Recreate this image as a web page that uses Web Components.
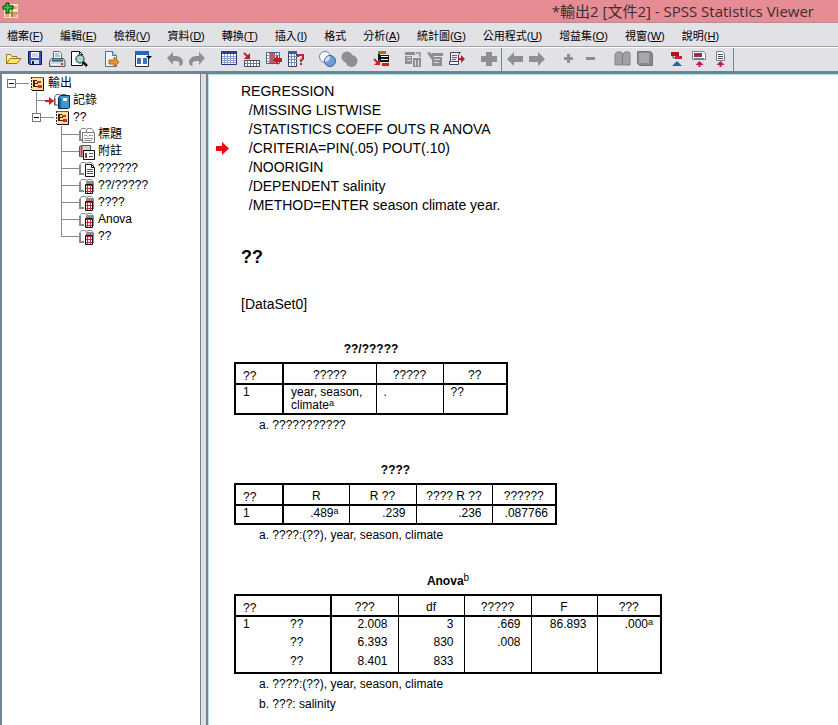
<!DOCTYPE html>
<html lang="zh-Hant">
<head>
<meta charset="utf-8">
<title>*輸出2 [文件2] - SPSS Statistics Viewer</title>
<style>
    body{
        margin:0;
        font-family:"Liberation Sans", "Noto Sans CJK TC", sans-serif;
        font-size:12px;
        color:#000;
    }
</style>
</head>
<body>
<viewer-window>
    <title-bar slot="title">*輸出2 [文件2] - SPSS Statistics Viewer</title-bar>
    <menu-bar slot="menu">
        <menu-entry key="F">檔案</menu-entry>
        <menu-entry key="E">編輯</menu-entry>
        <menu-entry key="V">檢視</menu-entry>
        <menu-entry key="D">資料</menu-entry>
        <menu-entry key="T">轉換</menu-entry>
        <menu-entry key="I">插入</menu-entry>
        <menu-entry>格式</menu-entry>
        <menu-entry key="A">分析</menu-entry>
        <menu-entry key="G">統計圖</menu-entry>
        <menu-entry key="U">公用程式</menu-entry>
        <menu-entry key="O">增益集</menu-entry>
        <menu-entry key="W">視窗</menu-entry>
        <menu-entry key="H">說明</menu-entry>
    </menu-bar>
    <tool-bar slot="tools" groups="open save print preview|export|dialog|undo redo|data case variable variables|select weight|designate|addcase script run|plus"></tool-bar>
    <tool-bar slot="tools" groups="back forward|expand collapse|show hide|heading title text"></tool-bar>

    <tree-item slot="outline" icon="output" label="輸出" open root>
        <tree-item icon="log" label="記錄" current></tree-item>
        <tree-item icon="output" label="??" open last>
            <tree-item icon="title" label="標題"></tree-item>
            <tree-item icon="notes" label="附註"></tree-item>
            <tree-item icon="page" label="??????"></tree-item>
            <tree-item icon="table" label="??/?????"></tree-item>
            <tree-item icon="table" label="????"></tree-item>
            <tree-item icon="table" label="Anova"></tree-item>
            <tree-item icon="table" label="??" last></tree-item>
        </tree-item>
    </tree-item>

    <output-log>REGRESSION
  /MISSING LISTWISE
  /STATISTICS COEFF OUTS R ANOVA
  /CRITERIA=PIN(.05) POUT(.10)
  /NOORIGIN
  /DEPENDENT salinity
  /METHOD=ENTER season climate year.</output-log>
    <output-heading>??</output-heading>
    <output-text>[DataSet0]</output-text>
    <pivot-table name="entered"></pivot-table>
    <pivot-table name="summary"></pivot-table>
    <pivot-table name="anova"></pivot-table>
</viewer-window>

<script>
const GRAY = '#8f8f92';

// toolbar icons, 18 x 18
const toolIcons = {
    open: `<path d="M2.500 13.500V4.500h4l1.500 2h5v2.500" fill="#fff3ae" stroke="#9a7a1c"/><path d="M2.500 13.500l3.500-5h11l-4 5z" fill="#ffe36a" stroke="#9a7a1c"/>`,
    save: `<path d="M2.500 1.500h13v13h-12l-1-1z" fill="#3b52b4" stroke="#10184f"/><path d="M5 2h8v6H5z" fill="#fff"/><path d="M6 4h6M6 6h6" stroke="#8aa"/><path d="M5 10h8v4H5z" fill="#d7dbe6"/><path d="M6 11h2v3H6z" fill="#10184f"/>`,
    print: `<path d="M5.500 9V1.500h6l2 2V9" fill="#fff" stroke="#3a7b84"/><path d="M7 4h4M7 6h5" stroke="#3a9aa8"/><path d="M3.500 8.500h12l1.500 3v5H1.500v-5z" fill="#d6d6d2" stroke="#54585c"/><path d="M4 10.500h11" stroke="#17657c" stroke-width="2"/><path d="M3 14.500h9" stroke="#fff"/><path d="M13 13h2v2h-2z" fill="#d33"/>`,
    preview: `<path d="M1.500 1.500h8l3 3v11h-11z" fill="#fff" stroke="#111"/><path d="M9.500 1.500v3h3" fill="none" stroke="#111"/><circle cx="10" cy="9" r="4" fill="#a9d6da" stroke="#53666b" stroke-width="1.500"/><path d="M13 12l4 4" stroke="#111" stroke-width="2.500"/>`,
    export: `<path d="M3.500 1.500h7l4 4v11h-11z" fill="#eef5fb" stroke="#42798c"/><path d="M10.500 1.500v4h4" fill="#b9d8e6" stroke="#42798c"/><path d="M7 10h5V7l5 5-5 5v-3H7z" fill="#f3922b" stroke="#b9640f"/>`,
    dialog: `<path d="M1.500 1.500h13v15h-13z" fill="#fff" stroke="#234"/><path d="M1 1h14v4H1z" fill="#2c62c4"/><path d="M3 8h4v6H3zM9 8h4v6H9z" fill="#3970d0"/><path d="M12 6h6l-3 3z" fill="#000"/>`,
    undo: `<path d="M1 8l6-6v4h3c4 0 7 3 7 6 0 3-2 4-4 4 1-2 1-5-3-5H7v4z" fill="${GRAY}"/>`,
    redo: `<path d="M17 8l-6-6v4H8c-4 0-7 3-7 6 0 3 2 4 4 4-1-2-1-5 3-5h3v4z" fill="${GRAY}"/>`,
    data: `<path d="M1.500 1.500h15v13h-15z" fill="#fff" stroke="#25346f"/><path d="M1 1h16v3H1z" fill="#25418f"/><path d="M2 6.500h14M2 8.500h14M2 10.500h14M2 12.500h14M4.500 4v10M7.500 4v10M10.500 4v10M13.500 4v10" stroke="#8e9fc4"/>`,
    case: `<path d="M2 3l4 4" stroke="#b91f2c" stroke-width="2"/><path d="M8 3v6H2z" fill="#b91f2c"/><path d="M2.500 10.500h15v6h-15z" fill="#fff" stroke="#3c4a6a"/><path d="M3 13.500h14M5.500 11v5M8.500 11v5M11.500 11v5M14.500 11v5" stroke="#6e7c98"/>`,
    variable: `<path d="M2.500 2.500h13v11h-13z" fill="#fff" stroke="#4a5f85"/><path d="M3 5.500h12M3 8.500h12M3 11.500h12M5.500 3v10M12.500 3v10" stroke="#8a9bb8"/><path d="M6 3h5v10H6z" fill="#b9596a"/><path d="M18 8h-4V5l-5 5 5 5v-3h4z" fill="#c31b26"/>`,
    variables: `<path d="M2.500 1.500h8v15h-8z" fill="#fff" stroke="#34456f"/><path d="M2 1h9v3H2z" fill="#405a96"/><path d="M3 6.500h8M3 9.500h8M3 12.500h8M5.500 4v12M8.500 4v12" stroke="#7c8cab"/><path d="M12 7V5h5v4l-2 1v2" fill="none" stroke="#c3202c" stroke-width="2"/><path d="M14 13h2v2h-2z" fill="#c3202c"/>`,
    select: `<circle cx="7" cy="7" r="5.500" fill="#fbfdff" stroke="#6e88a6"/><circle cx="12" cy="11" r="5.500" fill="#6f9bd8" stroke="#3d5f95"/><path d="M7 12a5 5 0 0 1 5-6 5 5 0 0 1-5 6z" fill="#cfe0f6"/>`,
    weight: `<circle cx="7" cy="7" r="5.500" fill="${GRAY}"/><circle cx="11.500" cy="11" r="6" fill="${GRAY}"/>`,
    designate: `<path d="M6 1h8v3H6z" fill="#9b7a16"/><path d="M7 5h10v7H7z" fill="#111"/><path d="M9 6.500h7M9 9.500h7" stroke="#fff"/><path d="M7 4v8" stroke="#111" stroke-width="2"/><path d="M10 13h7v3h-7z" fill="#d21d1d"/><path d="M2 9l4 4" stroke="#c8202c" stroke-width="2"/><path d="M8 9v6H2z" fill="#c8202c"/>`,
    addcase: `<path d="M1 2h10v3H1zM1 6h7v8H1zM9 8h8v9H9z" fill="${GRAY}"/><path d="M3 7.500h4M3 10.500h4M11.500 10v6M14.500 10v6" stroke="#dedde2"/><path d="M12 3h4v4" fill="none" stroke="${GRAY}" stroke-width="1.500"/>`,
    script: `<path d="M1 3l3-1 4 5h8v9H6v-6z" fill="${GRAY}"/><path d="M6 3h11v3H6z" fill="${GRAY}"/><path d="M8 9.500h6M8 12.500h5" stroke="#dedde2"/>`,
    run: `<path d="M2.500 2.500h10l-2 2v8h-8z" fill="#f1ecf4" stroke="#3a4668"/><path d="M1.500 11.500h9v3h-9z" fill="#fff" stroke="#3a4668"/><path d="M4 5.500h5M4 7.500h5M4 9.500h4" stroke="#a9405e"/><path d="M10 8h3V5l4 4-4 4v-3h-3z" fill="#b71c2a"/>`,
    plus: `<path d="M6 2h6v4h5v6h-5v4H6v-4H1V6h5z" fill="${GRAY}"/>`,
    back: `<path d="M1 9l7-7v4h9v6H8v4z" fill="${GRAY}"/>`,
    forward: `<path d="M17 9l-7-7v4H1v6h9v4z" fill="${GRAY}"/>`,
    expand: `<path d="M7 4h3v3h3v3h-3v3H7v-3H4V7h3z" fill="${GRAY}"/>`,
    collapse: `<path d="M4 7h9v3H4z" fill="${GRAY}"/>`,
    show: `<path d="M1 4l2-2h4l2 2 2-2h4l1 2v11H1z" fill="#a1a1a3" stroke="#858588"/><path d="M8.500 4v11" stroke="#78787a"/>`,
    hide: `<path d="M1.500 1.500h13l2 2v12h-13l-2-2z" fill="#89898b" stroke="#77777a"/><path d="M3 3h10v10H3z" fill="#a8a8aa"/>`,
    heading: `<path d="M3 2h8v4H3z" fill="#a71724"/><path d="M7 6h7v3H7z" fill="#d52029"/><path d="M5 6v2h2" stroke="#555"/><path d="M9 11l5 5H4z" fill="#1f66a8"/>`,
    title: `<path d="M2.500 1.500h11l2 2v6h-13z" fill="#fff" stroke="#777e92"/><path d="M4 3h8v4H4z" fill="#a52a4f"/><path d="M4 8.500h10" stroke="#777e92"/><path d="M9.500 11l4 4h-3v2h-2v-2h-3z" fill="#c51a48"/>`,
    text: `<path d="M4.500 1.500h6l2 2v7h-8z" fill="#fff" stroke="#777e92"/><path d="M6 4.500h5M6 6.500h5M6 8.500h5" stroke="#446"/><path d="M8.500 11l4 4h-3v2h-2v-2h-3z" fill="#c51a48"/>`
};

// outline icons, 16 x 16; most items are an open book with a badge in front
const book = `<path d="M.500 13.500V4.500l2-3h4l1 2 1-2h4l2 2.500v9.500" fill="#fff" stroke="#8b8b8d"/><path d="M1 4v9h4" fill="none" stroke="#8b8b8d" stroke-width="2"/><path d="M7.500 4v9" stroke="#8b8b8d"/>`;
const treeIcons = {
    output: `<path d="M3 1h11v13H3z" fill="#ffdf9c"/><path d="M2.500 1v13" stroke="#222" stroke-dasharray="2 1"/><path d="M3 14.500h11.500V1.500" fill="none" stroke="#111"/><path d="M3 1.500h11" stroke="#8a5a1c"/><path d="M4 4h4v1H6v2h3v1H6v2h3v1H4z" fill="#4b1e10"/><path d="M8 5h4v2H8zM9 9h4v3H9z" fill="#d1301c"/>`,
    log: `<path d="M.500 12.500V4.500l2-3h3l1 2 1-2h4l1 3" fill="#fff" stroke="#666"/><path d="M1 5v7h3" fill="none" stroke="#555"/><path d="M4.500 4.500l2-2h9v12l-1 1h-10z" fill="#3a97d0" stroke="#0d2c46"/><path d="M5 5h2v10H5z" fill="#17639a"/><path d="M9 5h4v3H9z" fill="#fff"/>`,
    title: `${book}<path d="M3.500 5.500h12v10h-12z" fill="#fff" stroke="#777"/><path d="M5 8.500h3l1 1 1-1h4M5 11.500h9M5 13.500h8" fill="none" stroke="#999"/>`,
    notes: `<path d="M.500 12.500V2.500l2-1h9v12z" fill="#d6d0d0" stroke="#555"/><path d="M2.500 2v10" stroke="#c2414b" stroke-width="2"/><path d="M4.500 6.500h11v9h-11z" fill="#fff" stroke="#111"/><path d="M6 9h2v5H6z" fill="#d1202a"/><path d="M10 9.500h4M10 12.500h4" stroke="#555"/>`,
    page: `${book}<path d="M6.500 3.500h6l3 3v9h-9z" fill="#fff" stroke="#111"/><path d="M12.500 3.500v3h3" fill="none" stroke="#111"/><path d="M8 8.500h6M8 10.500h6M8 12.500h6" stroke="#555"/>`,
    table: `${book}<path d="M8 3h6l1 2v9H8z" fill="#8b8b8d"/><path d="M6.500 6.500h7v9h-7z" fill="#fff" stroke="#111"/><path d="M7 7.500h6M7 10.500h6M7 13.500h6" stroke="#c9262d"/><path d="M8.500 7v8M11.500 7v8" stroke="#c9262d"/>`
};

class ViewerWindow extends HTMLElement {
    constructor() {
        super();
        this.attachShadow({mode: 'open'}).innerHTML = `
        <style>
            :host{
                display:flex;
                flex-direction:column;
                height:100vh;
                overflow:hidden;
                background:#fff;
            }
            .tools{
                display:flex;
                flex:none;
                height:23px;
                background:#e2e1e6;
                border-top:1px solid #fff;
                border-bottom:3px solid #708494;
            }
            .panes{
                display:flex;
                flex:1;
                min-height:0;
            }
            .outline{
                box-sizing:border-box;
                flex:none;
                width:201px;
                padding-top:1px;
                overflow:hidden;
                border-left:2px solid #708494;
                border-right:1px solid #75828c;
            }
            .divider{
                flex:none;
                width:5px;
                background:#dedfe4;
                border-right:2px solid #708494;
            }
            .output{
                flex:1;
                min-width:0;
                overflow:hidden;
                padding:7px 7px 0;
                border-left:1px solid #b4dfec;
                border-top:1px solid #b4dfec;
            }
        </style>
        <slot name="title"></slot>
        <slot name="menu"></slot>
        <div class="tools"><slot name="tools"></slot></div>
        <div class="panes">
            <nav class="outline"><slot name="outline"></slot></nav>
            <div class="divider"></div>
            <main class="output"><slot></slot></main>
        </div>
        `;
    }
}

class TitleBar extends HTMLElement {
    constructor() {
        super();
        this.attachShadow({mode: 'open'}).innerHTML = `
        <style>
            :host{
                display:flex;
                flex:none;
                justify-content:space-between;
                height:22px;
                padding:0 24px 0 2px;
                background:#e68c95;
                border-bottom:1px solid #b08f98;
                color:#3f2b30;
                font:15px/22px "Open Sans", "Noto Sans CJK TC", sans-serif;
            }
            svg{
                margin-top:2px;
            }
        </style>
        <svg width="17" height="17" viewBox="0 0 17 17">
            <path d="M4 2h12v14H2V8z" fill="#f8e3c0"/>
            <path d="M11 4h4v3h-4zM3 12h4v3H3zM9 12h6v3H9z" fill="#d8aa76"/>
            <path d="M10 3v12M3 11h13" stroke="#80542e"/>
            <path d="M4 1h3v3h4v3H7v4H4V7H1V4h3z" fill="#2fc62b" stroke="#0c3a0c"/>
        </svg>
        <span><slot></slot></span>
        `;
    }
}

class MenuBar extends HTMLElement {
    constructor() {
        super();
        this.attachShadow({mode: 'open'}).innerHTML = `
        <style>
            :host{
                display:flex;
                flex:none;
                gap:17px;
                height:23px;
                padding-left:7px;
                background:#e2e1e6;
                border-bottom:1px solid #a3a3a8;
            }
        </style>
        <slot></slot>
        `;
    }
}

class MenuEntry extends HTMLElement {
    constructor() {
        super();
        const key = this.getAttribute('key');
        this.attachShadow({mode: 'open'}).innerHTML = `
        <style>
            :host{
                display:block;
            }
            button{
                height:100%;
                padding:2px 0 0;
                border:none;
                background:none;
                color:#000;
                font-family:inherit;
                font-size:11px;
                line-height:20px;
                white-space:nowrap;
            }
        </style>
        <button type="button"><slot></slot>${key ? `(<u>${key}</u>)` : ''}</button>
        `;
    }
}

class ToolBar extends HTMLElement {
    constructor() {
        super();
        this.attachShadow({mode: 'open'});
        this.render();
    }

    render() {
        const groups = this.getAttribute('groups').split('|').map(group => `
            <div class="group">${group.split(' ').map(name => `
                <button type="button" aria-label="${name}">
                    <svg width="18" height="18" viewBox="0 0 18 18">${toolIcons[name]}</svg>
                </button>`).join('')}
            </div>`).join('');

        this.shadowRoot.innerHTML = `
        <style>
            :host{
                display:flex;
                gap:10px;
                padding:0 1px 0 2px;
                border-right:1px solid #708494;
            }
            .group{
                display:flex;
            }
            button{
                display:flex;
                justify-content:center;
                width:22px;
                height:22px;
                padding:2px 0 0;
                border:none;
                background:none;
            }
            svg{
                fill:none;
            }
        </style>
        ${groups}
        `;
    }
}

class TreeItem extends HTMLElement {
    constructor() {
        super();
        this.attachShadow({mode: 'open'});
        this.render();
    }

    render() {
        const toggle = this.hasAttribute('open')
            ? '<button type="button" aria-label="toggle"></button>' : '';
        const arrow = this.hasAttribute('current')
            ? '<svg class="arrow" width="9" height="8" viewBox="0 0 9 8"><path d="M0 3h4V0l5 4-5 4V5H0z" fill="#d8181d"/></svg>' : '';

        this.shadowRoot.innerHTML = `
        <style>
            :host{
                display:block;
                position:relative;
            }
            :host([root]){
                margin-left:9px;
            }
            .row{
                display:flex;
                align-items:center;
                height:17px;
            }
            .branch{
                position:relative;
                display:flex;
                align-items:center;
                justify-content:flex-end;
                width:18px;
                height:17px;
                background:linear-gradient(#8a8a8a, #8a8a8a) 0 8px / 100% 1px no-repeat;
            }
            :host(:not([root]))::before{
                content:"";
                position:absolute;
                top:0;
                bottom:0;
                border-left:1px solid #8a8a8a;
            }
            :host([last])::before{
                bottom:auto;
                height:9px;
            }
            button{
                position:absolute;
                left:-4px;
                top:4px;
                width:9px;
                height:9px;
                padding:0;
                border:1px solid #777;
                background:linear-gradient(#000, #000) 1px 3px / 5px 1px no-repeat #fff;
            }
            .icon{
                flex:none;
            }
            .label{
                margin-left:3px;
                line-height:17px;
                white-space:nowrap;
            }
            .children{
                margin-left:25px;
            }
        </style>
        <div class="row">
            <span class="branch">${toggle}${arrow}</span>
            <svg class="icon" width="16" height="16" viewBox="0 0 16 16">${treeIcons[this.getAttribute('icon')]}</svg>
            <span class="label">${this.getAttribute('label')}</span>
        </div>
        <div class="children"><slot></slot></div>
        `;
    }
}

class OutputLog extends HTMLElement {
    constructor() {
        super();
        this.attachShadow({mode: 'open'}).innerHTML = `
        <style>
            :host{
                display:flex;
                align-items:center;
                gap:12px;
            }
            svg{
                flex:none;
            }
            pre{
                margin:0;
                font-family:inherit;
                font-size:14px;
                line-height:19px;
            }
        </style>
        <svg width="13" height="13" viewBox="0 0 13 13"><path d="M0 4h6V0l7 6.500L6 13V9H0z" fill="#e80c0c"/></svg>
        <pre><slot></slot></pre>
        `;
    }
}

class OutputHeading extends HTMLElement {
    constructor() {
        super();
        this.attachShadow({mode: 'open'}).innerHTML = `
        <style>
            :host{
                display:block;
                padding:32px 0 28px 25px;
            }
            h1{
                margin:0;
                font-size:18px;
                line-height:20px;
            }
        </style>
        <h1><slot></slot></h1>
        `;
    }
}

class OutputText extends HTMLElement {
    constructor() {
        super();
        this.attachShadow({mode: 'open'}).innerHTML = `
        <style>
            :host{
                display:block;
                padding-left:25px;
                font-size:14px;
                line-height:19px;
            }
        </style>
        <slot></slot>
        `;
    }
}

const sup = mark => `<sup>${mark}</sup>`;

// "stub" is the number of leading label columns
const tables = {
    entered: {
        title: '??/?????',
        cols: [48, 93, 67, 64],
        stub: 1,
        align: 'left',
        head: ['??', '?????', '?????', '??'],
        rows: [['1', `year, season,<br>climate${sup('a')}`, '.', '??']],
        notes: ['a. ???????????']
    },
    summary: {
        title: '????',
        cols: [48, 66, 67, 76, 64],
        stub: 1,
        align: 'right',
        head: ['??', 'R', 'R ??', '???? R ??', '??????'],
        rows: [['1', `.489${sup('a')}`, '.239', '.236', '.087766']],
        notes: ['a. ????:(??), year, season, climate']
    },
    anova: {
        title: `Anova${sup('b')}`,
        cols: [48, 48, 67, 66, 67, 66, 64],
        stub: 2,
        align: 'right',
        head: ['??', '???', 'df', '?????', 'F', '???'],
        rows: [
            ['1', '??', '2.008', '3', '.669', '86.893', `.000${sup('a')}`],
            ['', '??', '6.393', '830', '.008', '', ''],
            ['', '??', '8.401', '833', '', '', '']
        ],
        notes: ['a. ????:(??), year, season, climate', 'b. ???: salinity']
    }
};

class PivotTable extends HTMLElement {
    constructor() {
        super();
        this.attachShadow({mode: 'open'});
        this.render();
    }

    render() {
        const data = tables[this.getAttribute('name')];
        const cols = data.cols.map(width => `<col style="width:${width}px">`).join('');
        const head = data.head.map((text, i) => i === 0
            ? `<th class="stub edge" colspan="${data.stub}">${text}</th>`
            : `<th>${text}</th>`).join('');
        const rows = data.rows.map(row => '<tr>' + row.map((text, i) => {
            if (i < data.stub) {
                return `<td class="stub ${i === data.stub - 1 ? 'edge' : ''}">${text}</td>`;
            }
            return `<td class="${data.align}">${text}</td>`;
        }).join('') + '</tr>').join('');

        this.shadowRoot.innerHTML = `
        <style>
            :host{
                display:block;
                padding:27px 0 0 18px;
            }
            table{
                width:min-content;
                border-collapse:collapse;
                table-layout:fixed;
                border:2px solid #000;
                line-height:13px;
            }
            caption{
                padding-bottom:5px;
                font-weight:bold;
                line-height:16px;
            }
            th, td{
                box-sizing:border-box;
                height:19px;
                padding:1px 7px;
                border-left:1px solid #000;
                font-weight:normal;
                vertical-align:top;
                white-space:nowrap;
            }
            th{
                height:20px;
                padding:5px 0 0;
                border-bottom:2px solid #000;
            }
            th.stub{
                padding:6px 0 0 7px;
            }
            .stub{
                text-align:left;
                border-left:none;
            }
            .edge{
                border-right:2px solid #000;
            }
            .right{
                padding-right:10px;
                text-align:right;
            }
            .right:last-child{
                padding-right:7px;
            }
            sup{
                font-size:9px;
                line-height:0;
                vertical-align:3px;
            }
            caption sup{
                font-size:10px;
                font-weight:normal;
                line-height:12px;
                vertical-align:4px;
            }
            p{
                margin:0;
                padding-left:25px;
                line-height:20px;
            }
        </style>
        <table>
            <caption>${data.title}</caption>
            <colgroup>${cols}</colgroup>
            <thead><tr>${head}</tr></thead>
            <tbody>${rows}</tbody>
        </table>
        ${data.notes.map(note => `<p>${note}</p>`).join('')}
        `;
    }
}

customElements.define('viewer-window', ViewerWindow);
customElements.define('title-bar', TitleBar);
customElements.define('menu-bar', MenuBar);
customElements.define('menu-entry', MenuEntry);
customElements.define('tool-bar', ToolBar);
customElements.define('tree-item', TreeItem);
customElements.define('output-log', OutputLog);
customElements.define('output-heading', OutputHeading);
customElements.define('output-text', OutputText);
customElements.define('pivot-table', PivotTable);
</script>
</body>
</html>
